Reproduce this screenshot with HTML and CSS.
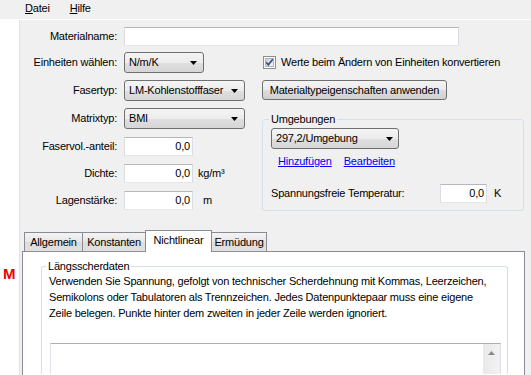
FILE: index.html
```html
<!DOCTYPE html>
<html lang="de">
<head>
<meta charset="utf-8">
<title>Material</title>
<link rel="stylesheet" href="styles.css">
</head>
<body>
<div class="menubar">
  <span class="menu"><u>D</u>atei</span>
  <span class="menu"><u>H</u>ilfe</span>
</div>
<div class="main">
  <div class="gutter"><span class="mark">M</span></div>
  <div class="window">
    <div class="row name-row">
      <span class="lbl">Materialname:</span>
      <div class="input w-name"></div>
    </div>
    <div class="cols">
      <div class="left">
        <div class="row sel-row">
          <span class="lbl">Einheiten wählen:</span>
          <div class="combo w-units"><span>N/m/K</span><svg class="arrow" width="7" height="4" viewBox="0 0 7 4"><path d="M0 0H7L3.5 4Z"/></svg></div>
        </div>
        <div class="row sel-row">
          <span class="lbl">Fasertyp:</span>
          <div class="combo w-type"><span>LM-Kohlenstofffaser</span><svg class="arrow" width="7" height="4" viewBox="0 0 7 4"><path d="M0 0H7L3.5 4Z"/></svg></div>
        </div>
        <div class="row sel-row">
          <span class="lbl">Matrixtyp:</span>
          <div class="combo w-type"><span>BMI</span><svg class="arrow" width="7" height="4" viewBox="0 0 7 4"><path d="M0 0H7L3.5 4Z"/></svg></div>
        </div>
        <div class="row in-row">
          <span class="lbl">Faservol.-anteil:</span>
          <div class="input num w-num">0,0</div>
        </div>
        <div class="row in-row">
          <span class="lbl">Dichte:</span>
          <div class="input num w-num">0,0</div>
          <span class="unit">kg/m³</span>
        </div>
        <div class="row in-row">
          <span class="lbl">Lagenstärke:</span>
          <div class="input num w-num">0,0</div>
          <span class="unit unit-m">m</span>
        </div>
      </div>
      <div class="right">
        <div class="check-row">
          <svg class="check" width="13" height="13" viewBox="0 0 13 13">
            <defs><linearGradient id="cg" x1="0" y1="0" x2="1" y2="1"><stop offset="0" stop-color="#cbcfd5"/><stop offset="1" stop-color="#f6f6f6"/></linearGradient></defs>
            <rect x="0.5" y="0.5" width="12" height="12" fill="#fdfdfd" stroke="#8e8f8f"/>
            <rect x="2.5" y="2.5" width="8" height="8" fill="url(#cg)" stroke="#b0b4ba"/>
            <path d="M3.2 6.2 L5.3 8.8 L9.8 3.2" stroke="#3c4f86" stroke-width="1.7" fill="none"/>
          </svg>
          <span>Werte beim Ändern von Einheiten konvertieren</span>
        </div>
        <div class="button">Materialtypeigenschaften anwenden</div>
        <fieldset class="group env">
          <legend>Umgebungen</legend>
          <div class="combo w-env"><span>297,2/Umgebung</span><svg class="arrow" width="7" height="4" viewBox="0 0 7 4"><path d="M0 0H7L3.5 4Z"/></svg></div>
          <div class="links"><a href="#">Hinzufügen</a><a href="#">Bearbeiten</a></div>
          <div class="temp-row">
            <span class="temp-lbl">Spannungsfreie Temperatur:</span>
            <div class="input num w-temp">0,0</div>
            <span class="unit">K</span>
          </div>
        </fieldset>
      </div>
    </div>
    <div class="tabs">
      <div class="tab t1">Allgemein</div>
      <div class="tab t2">Konstanten</div>
      <div class="tab t3 active">Nichtlinear</div>
      <div class="tab t4">Ermüdung</div>
    </div>
    <div class="panel">
      <fieldset class="group data">
        <legend>Längsscherdaten</legend>
        <p class="desc">Verwenden Sie Spannung, gefolgt von technischer Scherdehnung mit Kommas, Leerzeichen,<br>Semikolons oder Tabulatoren als Trennzeichen. Jedes Datenpunktepaar muss eine eigene<br>Zeile belegen. Punkte hinter dem zweiten in jeder Zeile werden ignoriert.</p>
        <div class="textbox">
          <div class="scrollbar">
            <svg class="up" width="7" height="4" viewBox="0 0 7 4"><path d="M0 4H7L3.5 0Z"/></svg>
          </div>
        </div>
      </fieldset>
    </div>
  </div>
</div>
</body>
</html>
```

FILE: styles.css
```css
html, body {
  margin: 0;
  padding: 0;
}
body {
  width: 531px;
  height: 375px;
  overflow: hidden;
  background: #ffffff;
  font-family: "Liberation Sans", Arial, sans-serif;
  font-size: 11px;
  line-height: 13px;
  letter-spacing: -0.2px;
  color: #000;
}

/* menu */
.menubar {
  height: 20px;
  box-sizing: border-box;
  background: #f0f0f0;
  border-bottom: 1px solid #ffffff;
  display: flex;
  align-items: center;
  padding: 0 0 2px 25px;
  gap: 20px;
}
.menu u { text-decoration: underline; }

.main {
  display: flex;
  height: 355px;
  overflow: hidden;
}
.gutter {
  width: 19px;
  flex: none;
  background: #fff;
  padding: 246px 0 0 3px;
  box-sizing: border-box;
}
.mark {
  display: block;
  color: #f00000;
  font-weight: bold;
  font-size: 15px;
  line-height: 15px;
  letter-spacing: 0;
}
.window {
  flex: 1;
  background: #f0f0f0;
  border-left: 1px solid #e2e2e2;
  display: flex;
  flex-direction: column;
  overflow: hidden;
}

/* rows */
.row {
  display: flex;
  align-items: center;
  gap: 7px;
}
.lbl {
  width: 97px;
  flex: none;
  text-align: right;
}
.name-row {
  margin-top: 7px;
  height: 19px;
}
.cols {
  display: flex;
  margin-top: 6px;
}
.left {
  width: 242px;
  flex: none;
  display: flex;
  flex-direction: column;
  gap: 7px;
}
.sel-row { height: 21px; }
.in-row { height: 19px; margin-top: 1px; }
.unit { margin-left: -2px; }
.unit-m { margin-left: 3px; }

/* inputs */
.input {
  box-sizing: border-box;
  height: 19px;
  background: #fff;
  border: 1px solid;
  border-color: #b5b7bd #d9dde3 #e3e6ea #d9dde3;
}
.num {
  text-align: right;
  padding-right: 2px;
  line-height: 17px;
}
.w-name { width: 335px; }
.w-num { width: 69px; }
.w-temp { width: 47px; }

.combo {
  box-sizing: border-box;
  height: 21px;
  border: 1px solid #707070;
  border-radius: 3px;
  background: linear-gradient(#f5f5f5, #ececec 50%, #dfdfdf 51%, #d6d6d6);
  display: flex;
  align-items: center;
  justify-content: space-between;
  padding: 0 6px 0 4px;
}
.w-units { width: 80px; }
.w-type { width: 121px; }
.w-env { width: 128px; padding-right: 5px; }
.arrow path { fill: #000; }

/* right column */
.right {
  width: 262px;
  flex: none;
  display: flex;
  flex-direction: column;
  align-items: flex-start;
}
.check-row {
  height: 21px;
  display: flex;
  align-items: center;
  gap: 5px;
  padding-left: 1px;
}
.check { display: block; }
.button {
  margin-top: 7px;
  box-sizing: border-box;
  width: 185px;
  height: 20px;
  border: 1px solid #707070;
  border-radius: 3px;
  background: linear-gradient(#f3f3f3, #ebebeb 50%, #dddddd 51%, #d0d0d0);
  text-align: center;
  line-height: 18px;
}

.group {
  margin: 0;
  border: 1px solid #d5dfe5;
  border-radius: 3px;
  box-sizing: border-box;
  min-width: 0;
}
.group legend {
  padding: 0 2px;
  line-height: 13px;
}
.env {
  margin-top: 13px;
  width: 262px;
  padding: 2px 7px 7px 8px;
}
.env legend { margin-left: -2px; }
.links {
  margin-top: 6px;
  height: 13px;
  display: flex;
  gap: 12px;
  padding-left: 7px;
}
.links a {
  color: #0000ff;
  text-decoration: underline;
}
.temp-row {
  margin-top: 16px;
  height: 19px;
  display: flex;
  align-items: center;
}
.temp-lbl { width: 169px; flex: none; }
.temp-row .unit { margin-left: 7px; }

/* tabs */
.tabs {
  margin-top: 19px;
  margin-left: 4px;
  height: 21px;
  flex: none;
  display: flex;
  align-items: flex-end;
}
.tab {
  box-sizing: border-box;
  height: 19px;
  border: 1px solid #898c95;
  border-bottom: none;
  background: linear-gradient(#f4f4f4, #e6e6e6 50%, #dcdcdc 51%, #e0e0e0);
  text-align: center;
  line-height: 18px;
  margin-left: -1px;
}
.t1 { width: 59px; margin-left: 0; }
.t2 { width: 64px; }
.t3 { width: 67px; }
.t4 { width: 56px; }
.tab.active {
  height: 22px;
  margin-bottom: -1px;
  background: #ffffff;
  position: relative;
  z-index: 1;
  line-height: 18px;
  padding-bottom: 3px;
}

.panel {
  margin-left: 2px;
  width: 503px;
  flex: 1 0 auto;
  min-height: 0;
  box-sizing: border-box;
  border: 1px solid #898c95;
  border-bottom: none;
  background: #ffffff;
  overflow: hidden;
}
.data {
  margin: 8px 0 0 18px;
  width: 467px;
  padding: 0 6px 0 7px;
  border-bottom: none;
  border-bottom-left-radius: 0;
  border-bottom-right-radius: 0;
}
.data legend { margin-left: -3px; }
.desc {
  margin: 0;
  line-height: 16px;
  white-space: nowrap;
}
.textbox {
  margin: 22px 0 0 1px;
  width: 451px;
  height: 31px;
  box-sizing: border-box;
  border: 1px solid;
  border-bottom: none;
  border-color: #abadb3 #dbdfe6 #e3e9ef #e2e3ea;
  background: #fff;
  display: flex;
  justify-content: flex-end;
}
.scrollbar {
  width: 17px;
  background: linear-gradient(90deg, #e9e9e9, #f2f2f2);
  display: flex;
  justify-content: center;
  padding-top: 7px;
  box-sizing: border-box;
}
.up { display: block; }
.up path { fill: #8a8a8a; }
```
